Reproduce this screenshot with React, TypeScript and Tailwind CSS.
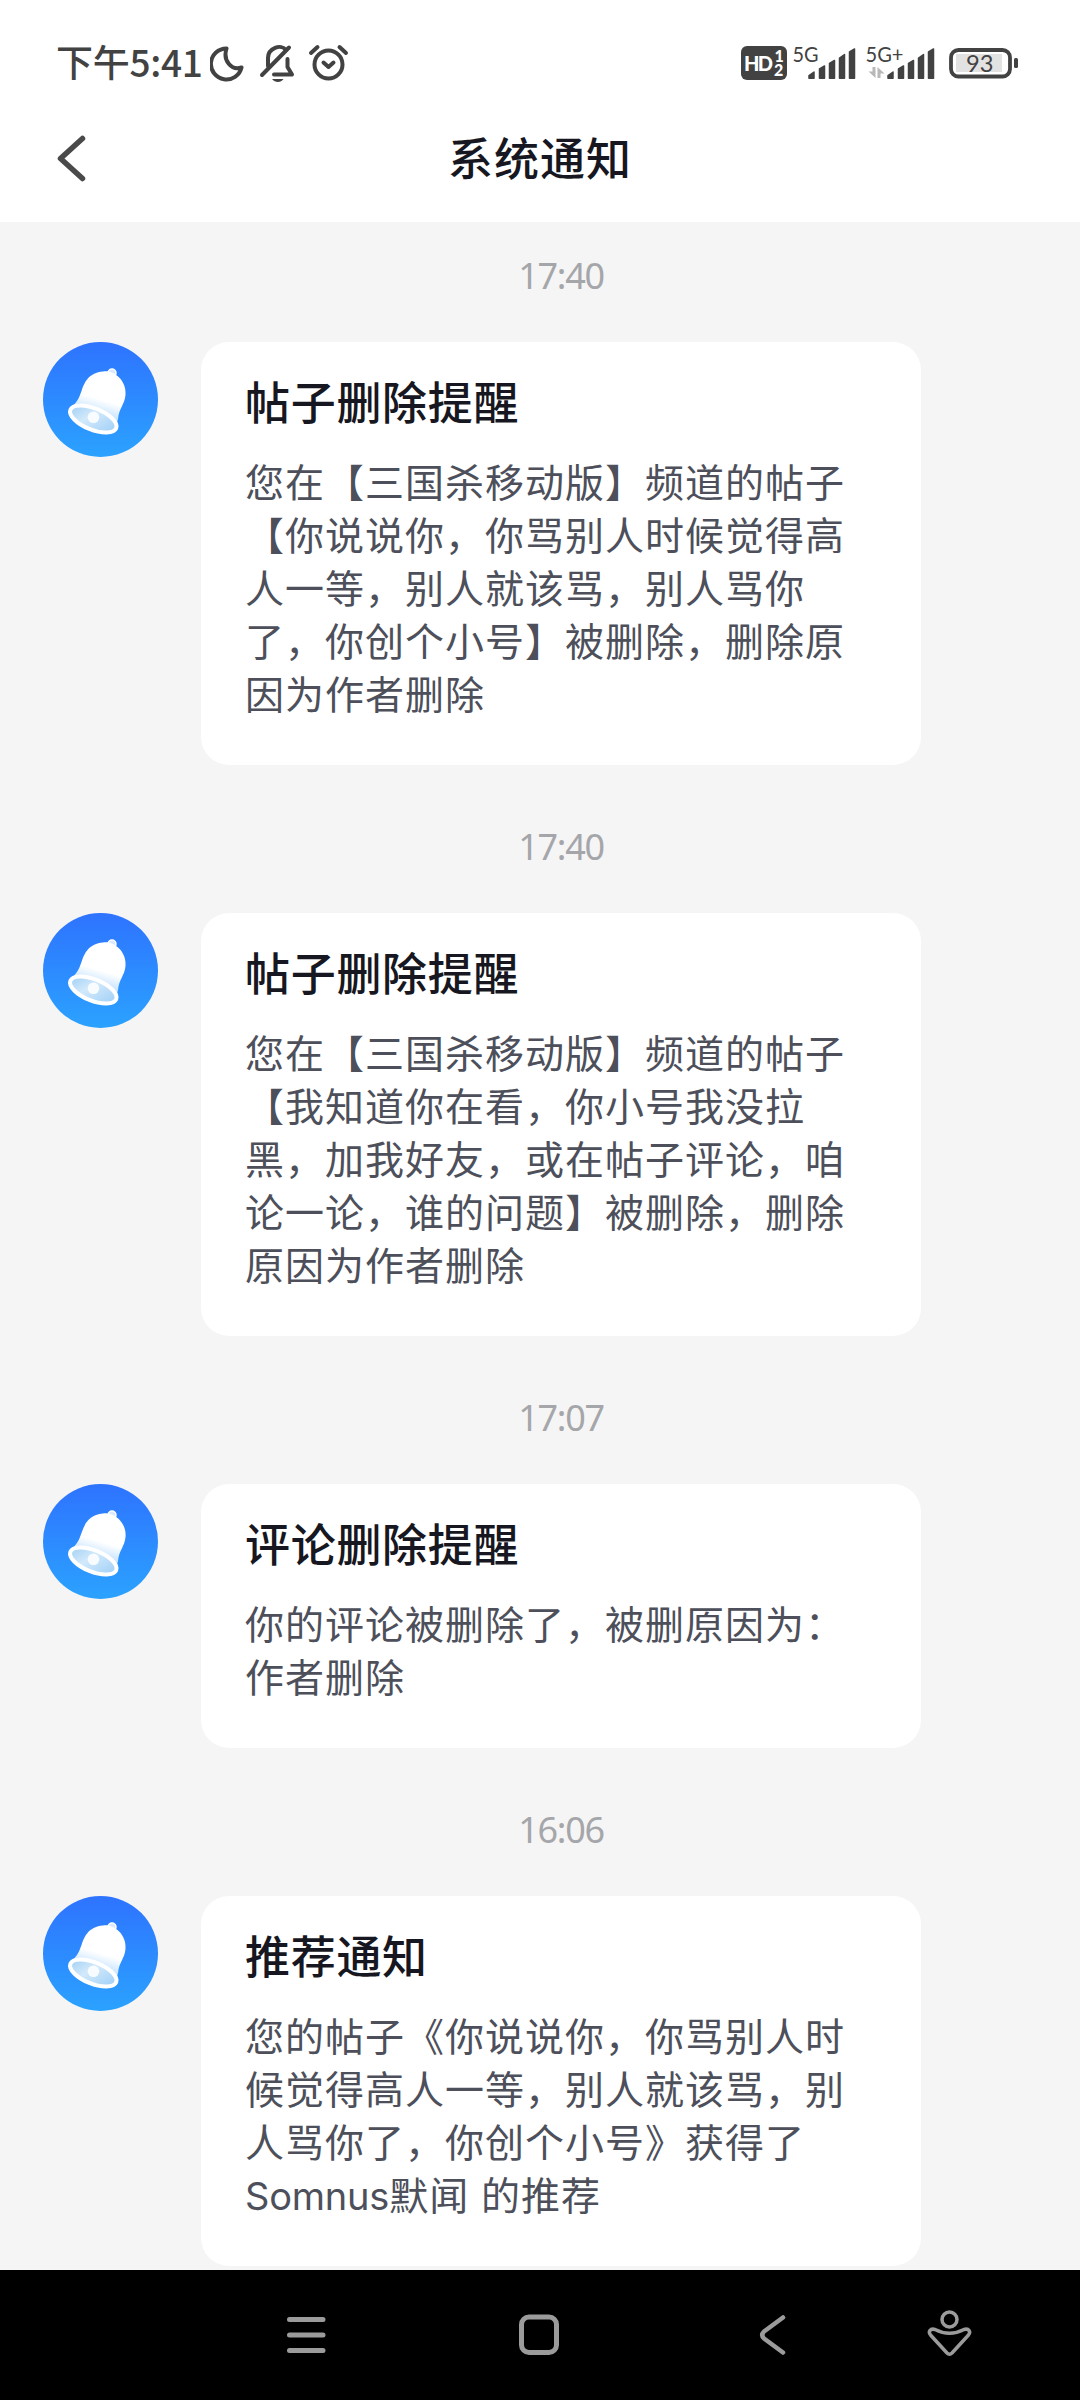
import React from "react";

type Notice = { time: string; title: string; lines: string[] };

const notices: Notice[] = [
  {
    time: "17:40",
    title: "帖子删除提醒",
    lines: [
      "您在【三国杀移动版】频道的帖子",
      "【你说说你，你骂别人时候觉得高",
      "人一等，别人就该骂，别人骂你",
      "了，你创个小号】被删除，删除原",
      "因为作者删除",
    ],
  },
  {
    time: "17:40",
    title: "帖子删除提醒",
    lines: [
      "您在【三国杀移动版】频道的帖子",
      "【我知道你在看，你小号我没拉",
      "黑，加我好友，或在帖子评论，咱",
      "论一论，谁的问题】被删除，删除",
      "原因为作者删除",
    ],
  },
  {
    time: "17:07",
    title: "评论删除提醒",
    lines: ["你的评论被删除了，被删原因为：", "作者删除"],
  },
  {
    time: "16:06",
    title: "推荐通知",
    lines: [
      "您的帖子《你说说你，你骂别人时",
      "候觉得高人一等，别人就该骂，别",
      "人骂你了，你创个小号》获得了",
      "Somnus默闻 的推荐",
    ],
  },
];

function StatusIconsLeft() {
  return (
    <svg className="ml-3 h-10 w-[140px]" viewBox="210 43 140 40" fill="none" stroke="#424242" strokeWidth="4" strokeLinecap="round" strokeLinejoin="round">
      <path d="M226.500 48.500A15.500 15.500 0 1 0 241.500 67.500C232 71 222.500 61 226.500 48.500Z" />
      <path d="M262 75L289 47.500" />
      <path d="M268 66V58C268 48 281 43.500 286 50" />
      <path d="M287.500 59V67L292 74.500H274" />
      <path d="M272 79H283.500C281 83 275 83 272 79Z" fill="#424242" stroke="none" />
      <circle cx="328.500" cy="64.500" r="14" />
      <path d="M311 53L317.500 47M346 53L339.500 47M323.500 62.500L328.500 67L333.500 62.500" />
    </svg>
  );
}

function Signal({ x }: { x: number }) {
  return (
    <g transform={`translate(${x} 0)`} fill="#424242" stroke="#424242" strokeWidth="1.500" strokeLinejoin="round">
      <path d="M1 78.300V75.500L6 72V78.300Z" />
      <path d="M11.500 78.300V69L16.500 66V78.300Z" />
      <path d="M21.500 78.300V63.500L26.500 60.500V78.300Z" />
      <path d="M31.500 78.300V58L36.500 54.500V78.300Z" />
      <path d="M41.500 78.300V52L46.500 49V78.300Z" />
    </g>
  );
}

function StatusIconsRight() {
  return (
    <svg className="h-[60px] w-[280px]" viewBox="740 33 280 60" fontFamily="Lato, sans-serif" fill="#424242">
      <rect x="741" y="46" width="46" height="34" rx="6" />
      <text x="744" y="70.500" fontSize="20" fontWeight="900" fill="#fff" textLength="29">HD</text>
      <text x="774.500" y="61.500" fontSize="16" fontWeight="900" fill="#fff">1</text>
      <text x="774" y="76" fontSize="16" fontWeight="900" fill="#fff">2</text>
      <text x="792.500" y="61.500" fontSize="20.500" textLength="26" lengthAdjust="spacingAndGlyphs">5G</text>
      <Signal x={808} />
      <text x="865.500" y="61.500" fontSize="20.500" textLength="38" lengthAdjust="spacingAndGlyphs">5G+</text>
      <path d="M875.500 67V78L868.500 71.500H872.500V67ZM877.500 78V67L884.500 73.500H880.500V78Z" fill="#b8b8b8" />
      <Signal x={887} />
      <rect x="951" y="50" width="59" height="26.500" rx="7.500" fill="none" stroke="#424242" strokeWidth="3.800" />
      <rect x="956" y="54" width="46" height="18" fill="#e2e2e2" />
      <text x="966" y="71.500" fontSize="23.500" textLength="27.500" lengthAdjust="spacingAndGlyphs">93</text>
      <rect x="1014" y="58" width="4" height="10" rx="1.500" />
    </svg>
  );
}

function BellAvatar() {
  return (
    <svg className="size-[115px] shrink-0" viewBox="0 0 115 115">
      <defs>
        <linearGradient id="disc" x1="0" y1="0" x2="0" y2="1">
          <stop offset="0" stopColor="#2e73ff" />
          <stop offset="1" stopColor="#2ba2ff" />
        </linearGradient>
        <linearGradient id="bell" x1="0.650" y1="0" x2="0.350" y2="1">
          <stop offset="0.500" stopColor="#fff" />
          <stop offset="0.850" stopColor="#b5dbff" />
        </linearGradient>
        <linearGradient id="mouth" x1="0" y1="0" x2="1" y2="0.300">
          <stop offset="0" stopColor="#9ccdf3" />
          <stop offset="0.500" stopColor="#d2e9fb" />
          <stop offset="1" stopColor="#a9d4f8" />
        </linearGradient>
      </defs>
      <circle cx="57.500" cy="57.500" r="57.500" fill="url(#disc)" />
      <circle cx="69" cy="31" r="4" fill="#d9eaff" stroke="#fff" strokeWidth="1.500" />
      <path d="M60 29.500C70 27.500 84 38 82.500 53C81.500 63 76 66 75 77L73 84L27 66C34 61 36 56 38.500 49C42 39 46 31 60 29.500Z" fill="url(#bell)" />
      <g transform="rotate(22 50.300 77)">
        <ellipse cx="50.300" cy="77" rx="24.700" ry="10.700" fill="url(#mouth)" stroke="#fff" strokeWidth="4" />
      </g>
      <circle cx="50.500" cy="75.300" r="5.800" fill="#f8fcff" />
    </svg>
  );
}

function BodyLine({ text }: { text: string }) {
  const [, latin, rest] = text.match(/^([A-Za-z]*)(.*)$/) ?? ["", "", text];
  return (
    <p className="h-[53px] whitespace-pre text-[39px] leading-[53px] tracking-[1px] text-[#4d505b] [word-spacing:2px]">
      {latin && <span className="font-['Inter'] text-[38px] tracking-[-0.200px]">{latin}</span>}
      {rest}
    </p>
  );
}

function NoticeItem({ notice }: { notice: Notice }) {
  return (
    <section className="w-full">
      <div className="flex h-[120px] justify-center pl-[42px] pt-[27px]">
        <time className="h-[54px] font-['Noto_Sans'] text-[36px] leading-[54px] tracking-[-1.300px] text-[#a5a6aa]">{notice.time}</time>
      </div>
      <div className="flex items-start pl-[43px]">
        <BellAvatar />
        <article className="ml-[43px] w-[720px] rounded-[28px] bg-white pb-[46px] pl-11 pt-8">
          <h2 className="mb-5 h-[60px] whitespace-nowrap text-[45px] font-medium leading-[54px] tracking-[0.700px] text-[#171722]">{notice.title}</h2>
          {notice.lines.map((line) => (
            <BodyLine key={line} text={line} />
          ))}
        </article>
      </div>
      <div className="h-7" />
    </section>
  );
}

export default function App() {
  return (
    <div className="flex h-[2400px] w-[1080px] flex-col overflow-hidden bg-[#f5f5f5] font-['Noto_Sans_CJK_SC',sans-serif]">
      <header className="h-[222px] shrink-0 bg-white">
        <div className="flex h-[126px] items-center justify-between pl-14 pr-[60px]">
          <div className="flex items-center">
            <span className="-mt-1 w-[142px] whitespace-nowrap text-[37px] font-medium leading-10 tracking-[-0.300px] text-[#424242]">下午5:41</span>
            <StatusIconsLeft />
          </div>
          <StatusIconsRight />
        </div>
        <div className="grid h-[66px] grid-cols-[200px_1fr_200px] items-center">
          <svg className="ml-14 h-[50px] w-8" viewBox="56 134 32 50" fill="none" stroke="#4a4a4a" strokeWidth="5.500" strokeLinecap="round" strokeLinejoin="round">
            <path d="M82.500 138.500L60.500 158.500L82.500 178.500" />
          </svg>
          <h1 className="-mt-1 text-center text-[45px] font-medium leading-[54px] tracking-[1px] text-[#171722]">系统通知</h1>
        </div>
      </header>
      <main className="min-h-0 flex-1 overflow-hidden">
        {notices.map((notice, i) => (
          <NoticeItem key={i} notice={notice} />
        ))}
      </main>
      <nav className="h-[130px] shrink-0 bg-black">
        <svg className="h-[130px] w-[1080px]" viewBox="0 2270 1080 130" fill="none" stroke="#9b9b9b" strokeLinecap="round" strokeLinejoin="round">
          <path strokeWidth="5" d="M289.500 2319.500H323M289.500 2335H323M289.500 2350.500H323" />
          <rect strokeWidth="5" x="521.500" y="2317" width="35" height="35.500" rx="7.500" />
          <path strokeWidth="4.500" d="M783 2317.500L764 2331.500Q760.500 2335 764 2338.500L783 2352.500" />
          <circle strokeWidth="3.500" cx="949.500" cy="2319.500" r="7.500" />
          <path strokeWidth="3.500" d="M935 2329.500Q949.500 2337 964 2329.500C969 2328 971 2332 968.500 2335L952 2353Q949.500 2355.500 947 2353L930.500 2335C928 2332 930 2328 935 2329.500Z" />
        </svg>
      </nav>
    </div>
  );
}
